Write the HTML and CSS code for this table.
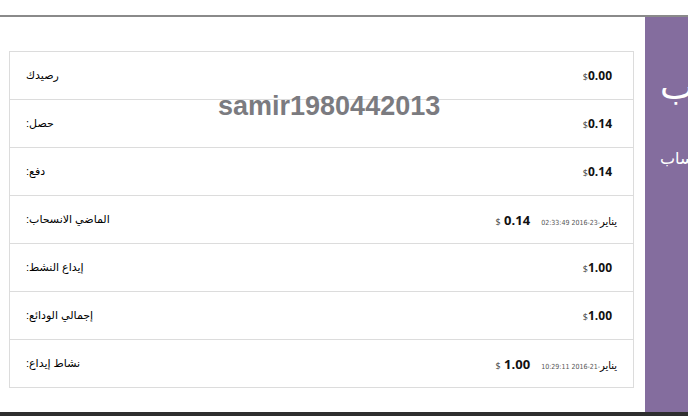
FILE: index.html
```html
<!DOCTYPE html>
<html lang="ar">
<head>
    <meta charset="UTF-8">
    <meta name="viewport" content="width=device-width, initial-scale=1.0">
    <title>رصيدك</title>
    <link rel="stylesheet" href="styles.css">
</head>
<body>
    <div class="top-line"></div>
    <div class="page">
        <div class="content">
            <table class="balance">
                <tr>
                    <td class="label"><span dir="rtl">رصيدك</span></td>
                    <td class="value"><span class="amount"><small>$</small>0.00</span></td>
                </tr>
                <tr>
                    <td class="label"><span dir="rtl">حصل:</span></td>
                    <td class="value"><span class="amount"><small>$</small>0.14</span></td>
                </tr>
                <tr>
                    <td class="label"><span dir="rtl">دفع:</span></td>
                    <td class="value"><span class="amount"><small>$</small>0.14</span></td>
                </tr>
                <tr>
                    <td class="label"><span dir="rtl">الماضي الانسحاب:</span></td>
                    <td class="value">
                        <span class="amount dated"><small>$</small> 0.14</span>
                        <span class="date" dir="ltr">02:33:49 2016-23-<b>يناير</b></span>
                    </td>
                </tr>
                <tr>
                    <td class="label"><span dir="rtl">إيداع النشط:</span></td>
                    <td class="value"><span class="amount"><small>$</small>1.00</span></td>
                </tr>
                <tr>
                    <td class="label"><span dir="rtl">إجمالي الودائع:</span></td>
                    <td class="value"><span class="amount"><small>$</small>1.00</span></td>
                </tr>
                <tr>
                    <td class="label"><span dir="rtl">نشاط إيداع:</span></td>
                    <td class="value">
                        <span class="amount dated"><small>$</small> 1.00</span>
                        <span class="date" dir="ltr">10:29:11 2016-21-<b>يناير</b></span>
                    </td>
                </tr>
            </table>
            <div class="watermark">samir1980442013</div>
        </div>
        <div class="side">
            <div class="side-title" dir="rtl">الانسحاب</div>
            <div class="side-sub" dir="rtl">الحساب</div>
        </div>
    </div>
    <div class="bottom-bar"></div>
</body>
</html>
```
FILE: styles.css
```css
body {
    margin: 0;
    overflow: hidden;
    background: #fff;
    font-family: "Liberation Sans", "DejaVu Sans", sans-serif;
    color: #111;
}
.top-line {
    height: 15px;
    border-bottom: 2px solid #8a8a8a;
}
.page {
    display: flex;
    width: 1000px;
    height: 395px;
}
.content {
    position: relative;
    width: 645px;
    flex-shrink: 0;
    padding: 34px 0 0 9px;
    box-sizing: border-box;
}
.balance {
    width: 625px;
    border-collapse: collapse;
    border: 1px solid #dcdcdc;
}
.balance td {
    height: 47px;
    padding: 0 16px;
    border-top: 1px solid #dcdcdc;
    font-size: 11px;
    vertical-align: middle;
}
.label {
    text-align: left;
    color: #000;
}
.value {
    text-align: right;
    white-space: nowrap;
}
.amount {
    font-family: "Open Sans", sans-serif;
    font-weight: bold;
    font-size: 12px;
    color: #111;
    margin-right: 5px;
}
.amount small {
    font-weight: normal;
    font-size: 9px;
    color: #444;
}
.amount.dated {
    font-size: 13px;
    margin-right: 8px;
}
.date {
    font-family: "DejaVu Sans Condensed", "Liberation Sans", sans-serif;
    font-stretch: condensed;
    font-size: 7px;
    color: #555;
}
.date b {
    font-family: "DejaVu Sans", sans-serif;
    font-weight: normal;
    font-size: 11px;
    color: #000;
}
.watermark {
    position: absolute;
    left: 218px;
    top: 74px;
    font-size: 27px;
    font-weight: bold;
    color: #7b7b80;
}
.side {
    flex: 1;
    background: #846d9e;
    color: #fff;
    padding: 48px 15px 0;
}
.side-title {
    text-align: left;
    font-size: 36px;
    line-height: 44px;
}
.side-sub {
    text-align: left;
    font-size: 16px;
    margin-top: 40px;
}
.bottom-bar {
    height: 4px;
    background: #2e2e2e;
}
```
